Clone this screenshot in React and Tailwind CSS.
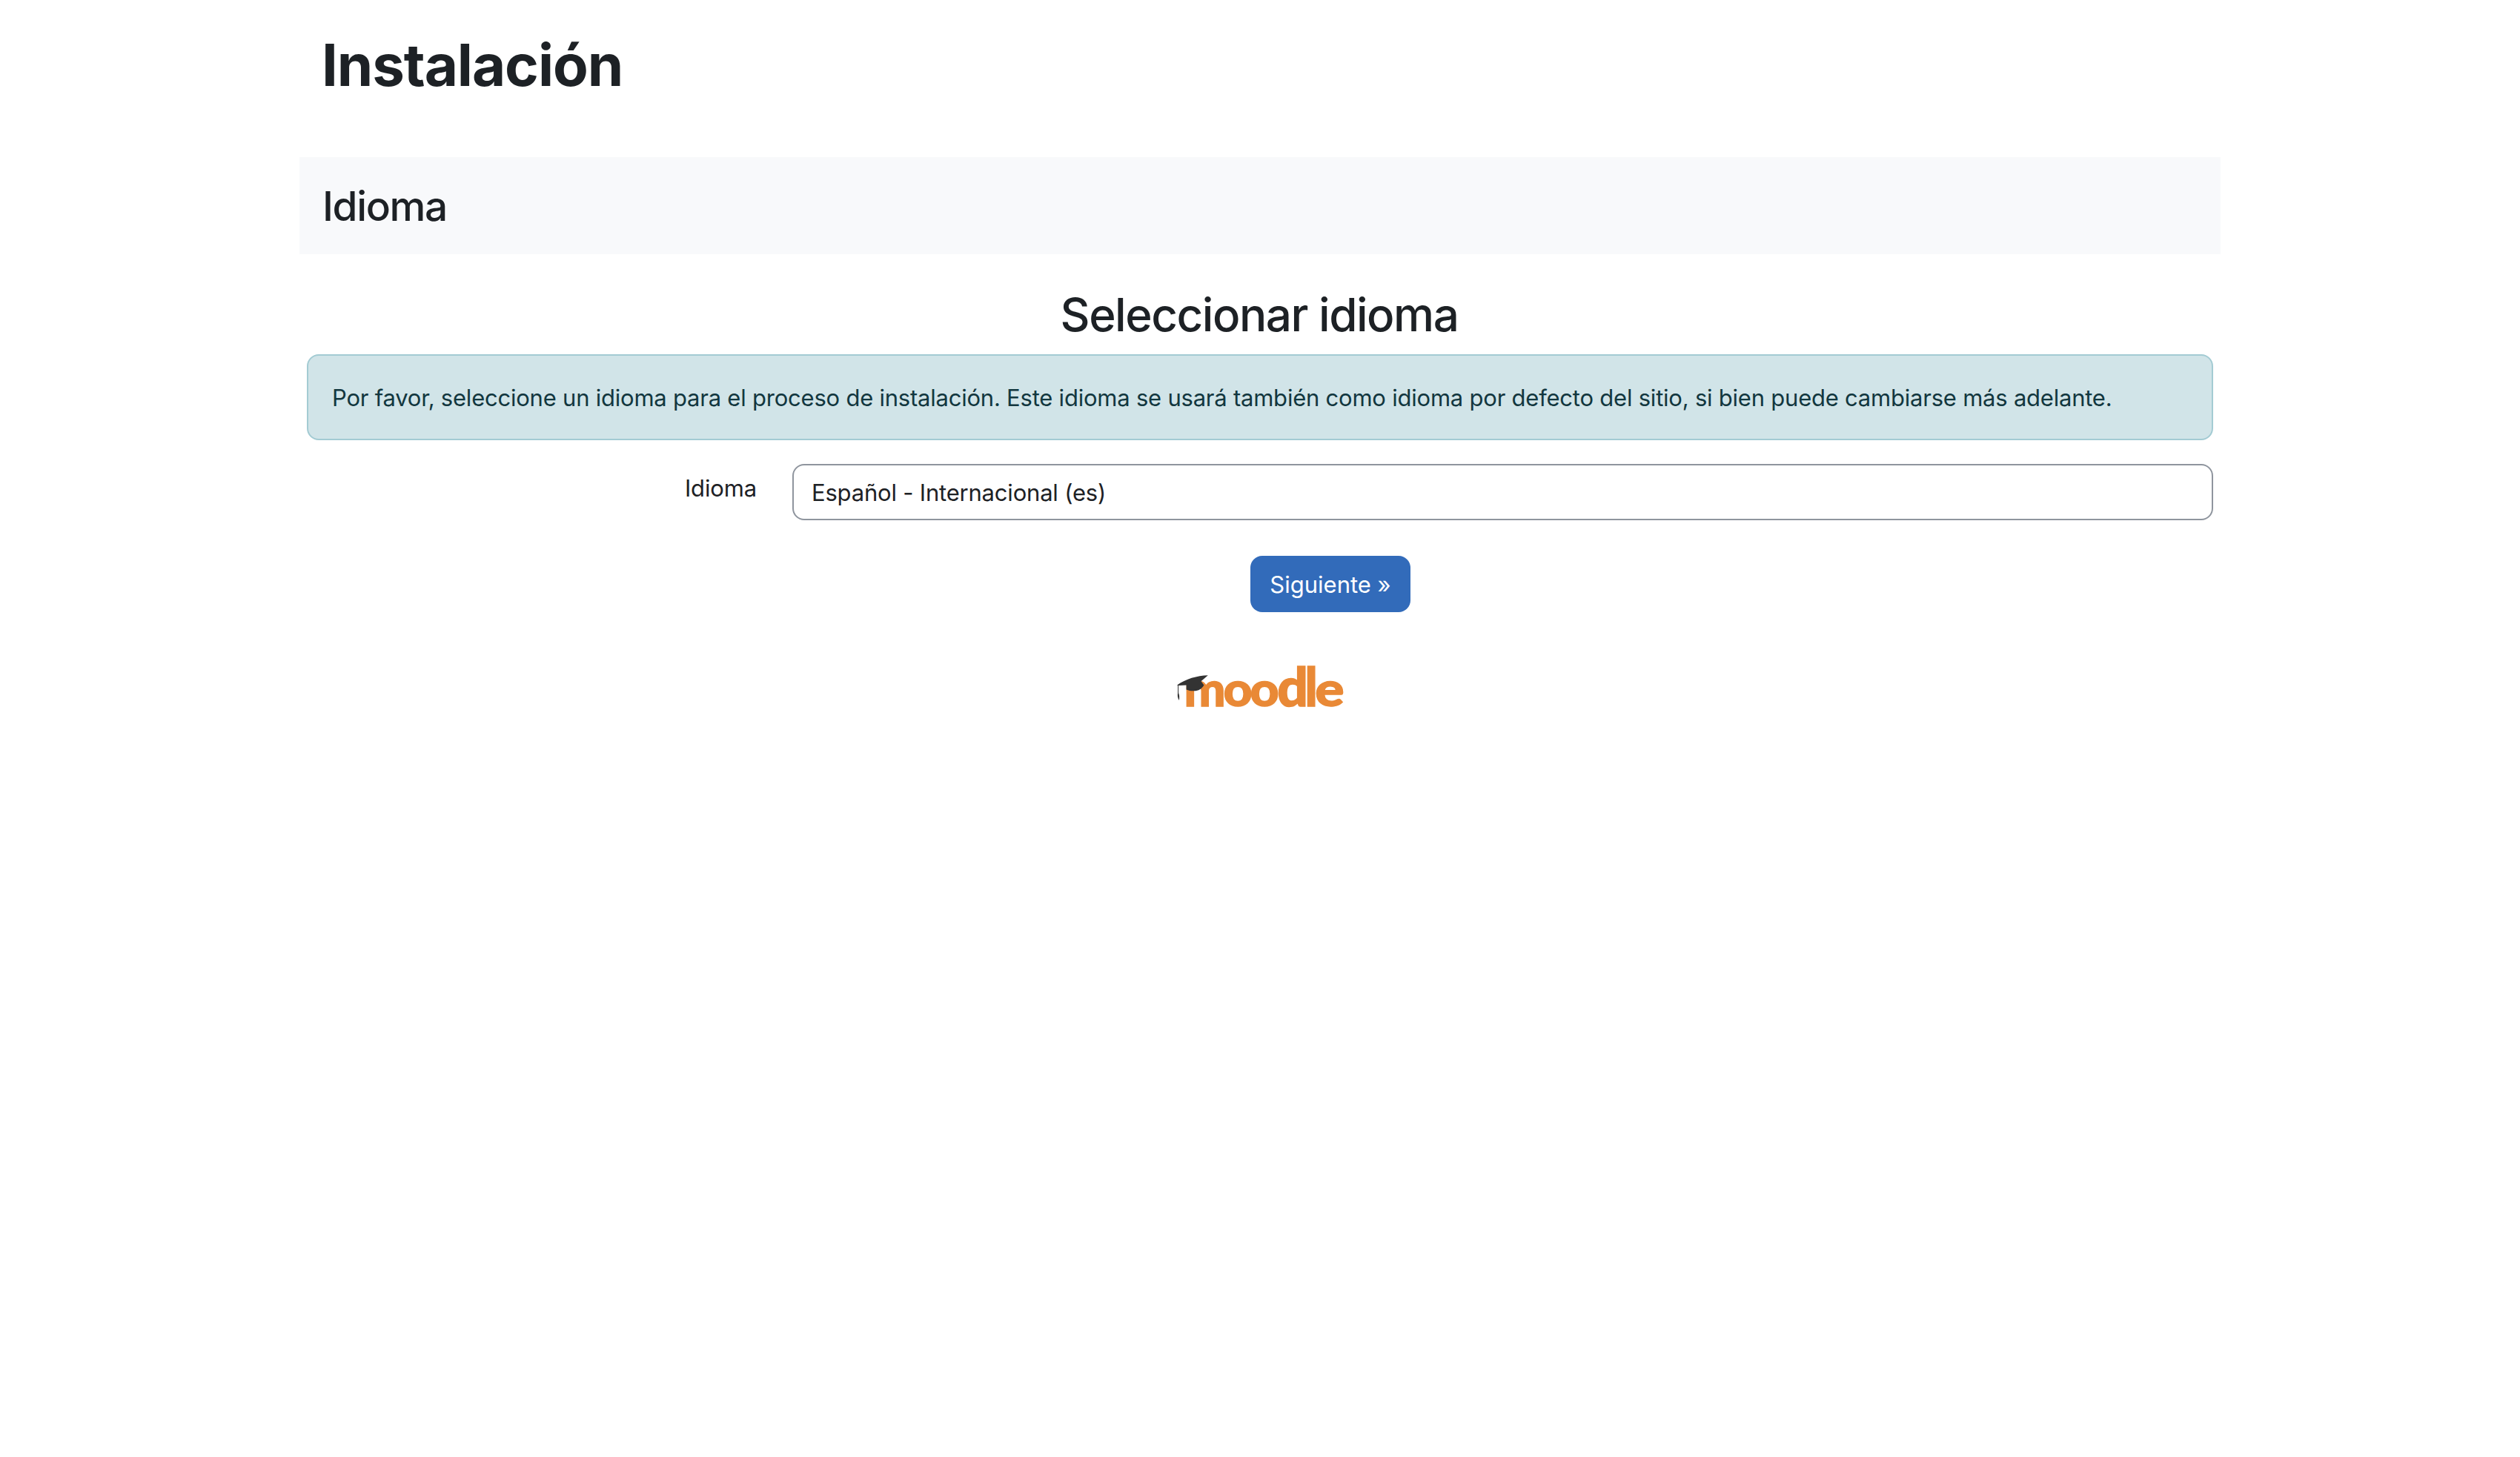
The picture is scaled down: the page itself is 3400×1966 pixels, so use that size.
import React, { useState } from "react";

const languages = [{ code: "es", label: "Español - Internacional (es)" }];

const MoodleLogo = () => {
  return (
    <svg
      width="240"
      height="112"
      viewBox="0 -20 240 112"
      role="img"
      aria-label="moodle"
    >
      <g
        fill="#e98936"
        stroke="#e98936"
        strokeWidth="2"
        className="font-['Lato',sans-serif] text-[100px] font-black"
      >
        <text transform="translate(17.4 63.2) scale(.665 .65)">m</text>
        <text transform="translate(70.4 63.4) scale(.68 .65)">o</text>
        <text transform="translate(106.6 63.4) scale(.68 .65)">o</text>
        <text transform="translate(143.2 63.2) scale(.73 .725)">d</text>
        <text transform="translate(180.4 63.2) scale(.68 .725)">l</text>
        <text transform="translate(194.2 63.4) scale(.735 .65)">e</text>
      </g>
      {/* graduation cap */}
      <path
        d="M8 34.6C20 26 35 21.6 49.8 21.2L40.5 29.2L44.4 34.4C41.5 39.5 37 42.2 31 42.3C27 42.4 23.6 41.7 20.6 40.4V34.4L10.2 34.9Z"
        fill="#333333"
      />
      {/* tassel */}
      <path d="M9.6 34V45" stroke="#333333" strokeWidth="1" />
      <path
        d="M9.4 43.5C8.4 47.5 8.6 51.5 10.8 55C11.6 51 11.3 47 9.4 43.5Z"
        fill="#333333"
      />
    </svg>
  );
};

const App = () => {
  const [lang, setLang] = useState("es");

  return (
    <div className="min-h-screen bg-white font-['Inter',sans-serif] text-[31px] leading-[48px] text-[#1d2125]">
      <div className="mx-auto flex w-[2592px] flex-col pt-10">
        <header className="mb-[76px] pl-[30px]">
          <h1 className="text-[78px] leading-[96px] font-bold tracking-[-1.1px]">
            Instalación
          </h1>
        </header>

        <div className="h-[131px] bg-[#f8f9fb] pt-[33px] pl-[31px]">
          <h2 className="text-[55px] leading-[66px] font-medium tracking-[-1.4px]">
            Idioma
          </h2>
        </div>

        <main className="px-[10px] pt-11">
          <h2 className="mb-[15px] pr-[2px] text-center text-[62px] leading-[76px] font-medium tracking-[-1.48px]">
            Seleccionar idioma
          </h2>

          <div className="h-[116px] rounded-2xl border-2 border-[#a3cbd3] bg-[#d1e4e8] pt-[33px] pr-[31px] pl-8 tracking-[-0.225px] text-[#12373f]">
            Por favor, seleccione un idioma para el proceso de instalación. Este
            idioma se usará también como idioma por defecto del sitio, si bien
            puede cambiarse más adelante.
          </div>

          <form onSubmit={(e) => e.preventDefault()}>
            <div className="mt-8 flex items-start">
              <label
                htmlFor="lang"
                className="mr-12 w-[607px] pt-[9px] text-right tracking-[-0.15px]"
              >
                Idioma
              </label>
              <select
                id="lang"
                value={lang}
                onChange={(e) => setLang(e.target.value)}
                className="h-[76px] flex-1 appearance-none rounded-2xl border-2 border-[#8f959e] bg-white px-6 pt-[2px] tracking-[-0.2px]"
              >
                {languages.map((item) => (
                  <option key={item.code} value={item.code}>
                    {item.label}
                  </option>
                ))}
              </select>
            </div>

            <div className="mt-12 ml-[190px] flex justify-center">
              <button
                type="submit"
                className="h-[76px] w-[216px] rounded-2xl bg-[#326bba] pt-[1px] text-white"
              >
                Siguiente »
              </button>
            </div>
          </form>
        </main>

        <footer className="mt-11 flex justify-center">
          <MoodleLogo />
        </footer>
      </div>
    </div>
  );
};

export default App;
